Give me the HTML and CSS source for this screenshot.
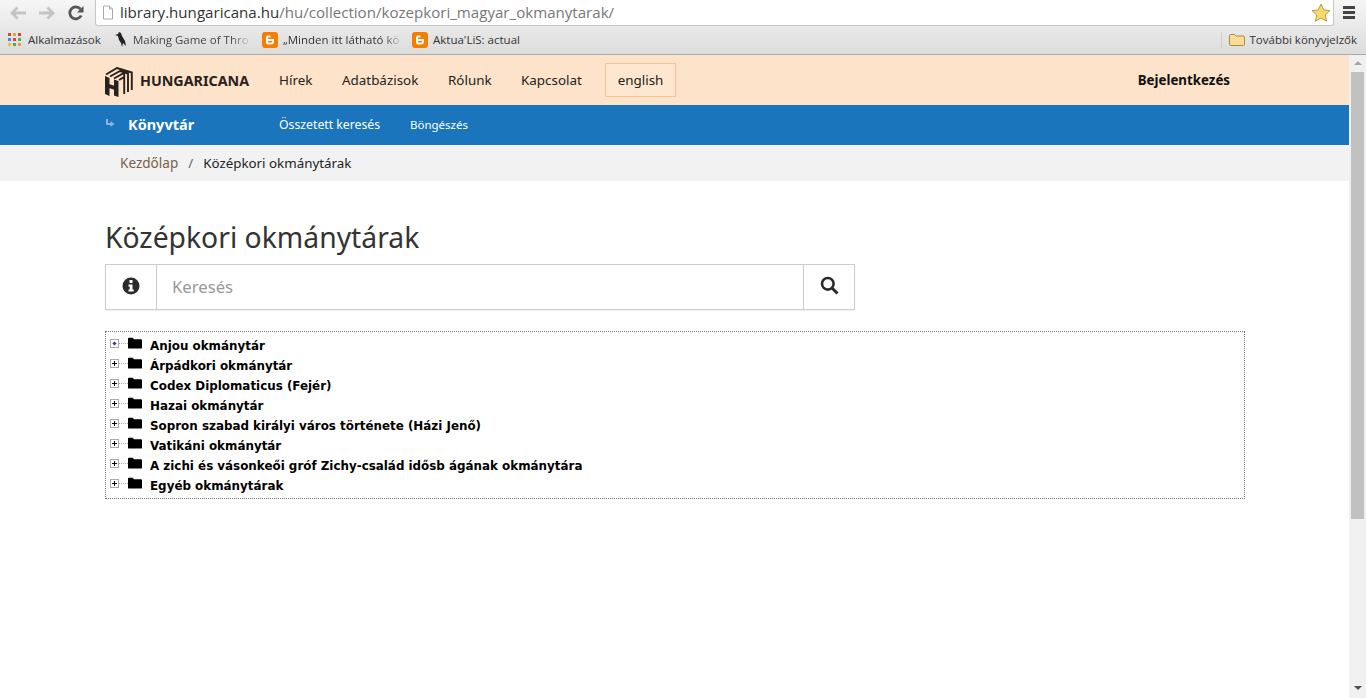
FILE: index.html
```html
<!DOCTYPE html>
<html lang="hu">
<head>
<meta charset="utf-8">
<title>Középkori okmánytárak</title>
<link rel="stylesheet" href="styles.css">
</head>
<body>
<div class="browser">
  <div class="toolbar">
    <svg class="nav-ic" width="16" height="14" viewBox="0 0 16 14"><path d="M7.500 1.500 2 7l5.500 5.500M2 7h14" fill="none" stroke="#c4c4c4" stroke-width="2.800"/></svg>
    <svg class="nav-ic" width="16" height="14" viewBox="0 0 16 14"><path d="M8.500 1.500 14 7l-5.500 5.500M14 7H0" fill="none" stroke="#c4c4c4" stroke-width="2.800"/></svg>
    <svg class="nav-ic" width="16" height="16" viewBox="0 0 16 16"><path d="M13.200 10.500A6 6 0 1 1 12.400 4" fill="none" stroke="#555" stroke-width="2.800"/><path d="M15.500 1v6.500H9z" fill="#555"/></svg>
    <div class="omnibox">
      <svg width="12" height="15" viewBox="0 0 12 15"><path d="M1.500 1h6l3 3v10h-9zM7.500 1v3h3" fill="#fff" stroke="#aaa"/></svg>
      <span class="url"><span class="url-host">library.hungaricana.hu</span>/hu/collection/kozepkori_magyar_okmanytarak/</span>
      <svg class="star" width="20" height="19" viewBox="0 0 20 19"><path d="M10 1l2.700 5.900 6.300.7-4.700 4.300 1.300 6.300L10 15l-5.600 3.200 1.300-6.300L1 7.600l6.300-.7z" fill="#fbd968" stroke="#b59a4a"/></svg>
    </div>
    <div class="menu-ic"><span></span><span></span><span></span></div>
  </div>
  <div class="bookmarks">
    <svg width="13" height="13" viewBox="0 0 13 13" class="apps"><rect x="0" y="0" width="3" height="3" fill="#d9453a"/><rect x="5" y="0" width="3" height="3" fill="#e8a33d"/><rect x="10" y="0" width="3" height="3" fill="#d9453a"/><rect x="0" y="5" width="3" height="3" fill="#4a86e8"/><rect x="5" y="5" width="3" height="3" fill="#d9453a"/><rect x="10" y="5" width="3" height="3" fill="#5aa95a"/><rect x="0" y="10" width="3" height="3" fill="#e8c33d"/><rect x="5" y="10" width="3" height="3" fill="#5aa95a"/><rect x="10" y="10" width="3" height="3" fill="#e8a33d"/></svg>
    <span class="bm bm-apps">Alkalmazások</span>
    <svg class="bird" width="13" height="15" viewBox="0 0 13 15"><path d="M1 3l3-1 1-2 2 1 1 3 3 5 1 5-3-3-1 4-1-4-2-3-1-4z" fill="#222"/></svg>
    <span class="bm bm-game">Making Game of Thro</span>
    <svg class="blog" width="16" height="16" viewBox="0 0 16 16"><rect width="16" height="16" rx="3" fill="#f57d00"/><path d="M5 4.500h3.500M5 8h6v1.500a2 2 0 0 1-2 2H6.500a1.500 1.500 0 0 1-1.500-1.500V4.500" fill="none" stroke="#fff" stroke-width="2"/></svg>
    <span class="bm bm-min">„Minden itt látható kö</span>
    <svg class="blog" width="16" height="16" viewBox="0 0 16 16"><rect width="16" height="16" rx="3" fill="#f57d00"/><path d="M5 4.500h3.500M5 8h6v1.500a2 2 0 0 1-2 2H6.500a1.500 1.500 0 0 1-1.500-1.500V4.500" fill="none" stroke="#fff" stroke-width="2"/></svg>
    <span class="bm">Aktua'LiS: actual</span>
    <span class="bm-spacer"></span>
    <span class="bm-sep"></span>
    <svg class="folder" width="16" height="13" viewBox="0 0 16 13"><path d="M.5 2.500a1 1 0 0 1 1-1h4l1.500 1.500h7.500a1 1 0 0 1 1 1v7.500a1 1 0 0 1-1 1h-13a1 1 0 0 1-1-1z" fill="#fbdc92" stroke="#a98a4b"/></svg>
    <span class="bm">További könyvjelzők</span>
  </div>
</div>
<div class="viewport">
  <div class="page">
    <header class="topnav">
      <a class="logo">
        <svg width="28" height="30" viewBox="0 0 28 30"><path d="M0 9l4.500 2v18L0 27zM9 12.500l4.500 1.500v16L9 28.500zM4 17l6 2v4l-6-2z" fill="#2a211d"/><path d="M1 7.500 12 1l14.800 4.500V23M5 9.500 15 4l8 2.500V25M9 11.500 18 6.500l1.200.4V27M14 13l5-2.800" fill="none" stroke="#2a211d" stroke-width="1.900"/></svg>
        <span class="logo-text">HUNGARICANA</span>
      </a>
      <a class="nav-a nav-hirek">Hírek</a>
      <a class="nav-a nav-adat">Adatbázisok</a>
      <a class="nav-a nav-rol">Rólunk</a>
      <a class="nav-a nav-kap">Kapcsolat</a>
      <a class="nav-a lang">english</a>
      <a class="login">Bejelentkezés</a>
    </header>
    <nav class="subnav">
      <svg class="sub-arrow" width="10" height="10" viewBox="0 0 10 10"><path d="M2 0v5h4" fill="none" stroke="#8db5da" stroke-width="2"/><path d="M5.500 2 9.500 5 5.500 8z" fill="#8db5da"/></svg>
      <span class="sub-title">Könyvtár</span>
      <a class="sub-a sub-first">Összetett keresés</a>
      <a class="sub-a sub-last">Böngészés</a>
    </nav>
    <div class="crumbs">
      <a class="crumb-link">Kezdőlap</a>
      <span class="crumb-sep">/</span>
      <span>Középkori okmánytárak</span>
    </div>
    <main class="content">
      <h1 class="title">Középkori okmánytárak</h1>
      <form class="search">
        <span class="search-cell search-info">
          <svg width="18" height="18" viewBox="0 0 18 18"><circle cx="9" cy="9" r="8.500" fill="#2b2b2b"/><rect x="7.500" y="3" width="3" height="3" fill="#fff"/><path d="M6.500 7.500h4v5h1.200v2H6.500v-2h1.200v-3H6.500z" fill="#fff"/></svg>
        </span>
        <span class="search-input">Keresés</span>
        <span class="search-cell search-btn">
          <svg width="19" height="19" viewBox="0 0 19 19"><circle cx="7.800" cy="7.800" r="5.800" fill="none" stroke="#2b2b2b" stroke-width="2.600"/><path d="M12 12l5.500 5.500" stroke="#2b2b2b" stroke-width="3"/></svg>
        </span>
      </form>
      <ul class="tree">
        <li class="tree-item"><span class="exp exp-active"></span><span class="dots"></span><svg class="fold" width="14" height="12" viewBox="0 0 15 12"><path d="M0 1.500a1 1 0 0 1 1-1h4l1.500 1.500H14a1 1 0 0 1 1 1V11a1 1 0 0 1-1 1H1a1 1 0 0 1-1-1z"/></svg><span class="label">Anjou okmánytár</span></li>
        <li class="tree-item"><span class="exp"></span><span class="dots"></span><svg class="fold" width="14" height="12" viewBox="0 0 15 12"><path d="M0 1.500a1 1 0 0 1 1-1h4l1.500 1.500H14a1 1 0 0 1 1 1V11a1 1 0 0 1-1 1H1a1 1 0 0 1-1-1z"/></svg><span class="label">Árpádkori okmánytár</span></li>
        <li class="tree-item"><span class="exp"></span><span class="dots"></span><svg class="fold" width="14" height="12" viewBox="0 0 15 12"><path d="M0 1.500a1 1 0 0 1 1-1h4l1.500 1.500H14a1 1 0 0 1 1 1V11a1 1 0 0 1-1 1H1a1 1 0 0 1-1-1z"/></svg><span class="label">Codex Diplomaticus (Fejér)</span></li>
        <li class="tree-item"><span class="exp"></span><span class="dots"></span><svg class="fold" width="14" height="12" viewBox="0 0 15 12"><path d="M0 1.500a1 1 0 0 1 1-1h4l1.500 1.500H14a1 1 0 0 1 1 1V11a1 1 0 0 1-1 1H1a1 1 0 0 1-1-1z"/></svg><span class="label">Hazai okmánytár</span></li>
        <li class="tree-item"><span class="exp"></span><span class="dots"></span><svg class="fold" width="14" height="12" viewBox="0 0 15 12"><path d="M0 1.500a1 1 0 0 1 1-1h4l1.500 1.500H14a1 1 0 0 1 1 1V11a1 1 0 0 1-1 1H1a1 1 0 0 1-1-1z"/></svg><span class="label">Sopron szabad királyi város története (Házi Jenő)</span></li>
        <li class="tree-item"><span class="exp"></span><span class="dots"></span><svg class="fold" width="14" height="12" viewBox="0 0 15 12"><path d="M0 1.500a1 1 0 0 1 1-1h4l1.500 1.500H14a1 1 0 0 1 1 1V11a1 1 0 0 1-1 1H1a1 1 0 0 1-1-1z"/></svg><span class="label">Vatikáni okmánytár</span></li>
        <li class="tree-item"><span class="exp"></span><span class="dots"></span><svg class="fold" width="14" height="12" viewBox="0 0 15 12"><path d="M0 1.500a1 1 0 0 1 1-1h4l1.500 1.500H14a1 1 0 0 1 1 1V11a1 1 0 0 1-1 1H1a1 1 0 0 1-1-1z"/></svg><span class="label">A zichi és vásonkeői gróf Zichy-család idősb ágának okmánytára</span></li>
        <li class="tree-item"><span class="exp"></span><span class="dots"></span><svg class="fold" width="14" height="12" viewBox="0 0 15 12"><path d="M0 1.500a1 1 0 0 1 1-1h4l1.500 1.500H14a1 1 0 0 1 1 1V11a1 1 0 0 1-1 1H1a1 1 0 0 1-1-1z"/></svg><span class="label">Egyéb okmánytárak</span></li>
      </ul>
    </main>
  </div>
  <div class="scrollbar">
    <span class="sb-up"></span>
    <span class="sb-thumb"></span>
    <span class="sb-down"></span>
  </div>
</div>
</body>
</html>
```
FILE: styles.css
```css
* { box-sizing: border-box; }
html, body { margin: 0; height: 100%; overflow: hidden; background: #fff; }
body { display: flex; flex-direction: column; font-family: "Noto Sans", sans-serif; color: #222; }
a { color: inherit; text-decoration: none; }

.browser { height: 55px; flex: none; background: linear-gradient(#f6f6f6, #dcdcdc); border-bottom: 1px solid #a9a9a9; }
.toolbar { height: 27px; display: flex; align-items: center; padding-left: 10px; }
.nav-ic { margin-right: 13px; margin-top: -2px; }
.nav-ic + .nav-ic + .nav-ic { margin-right: 11px; }
.omnibox { width: 1239px; height: 26px; margin-top: -2px; background: #fff; border: 1px solid #c6c6c6; border-top: 0; border-radius: 0 0 3px 3px; display: flex; align-items: center; padding-left: 6px; }
.url { font-family: "Open Sans", sans-serif; font-size: 15.100px; color: #777; margin-left: 6px; white-space: nowrap; flex: 1; }
.url-host { color: #333; }
.star { margin-right: 2px; }
.menu-ic { margin-left: 9px; display: flex; flex-direction: column; gap: 2px; margin-top: -2px; }
.menu-ic span { display: block; width: 12px; height: 3px; background: #444; }

.bookmarks { height: 27px; display: flex; align-items: center; padding: 0 9px 2px 8px; font-family: "Open Sans", sans-serif; font-size: 11.500px; color: #333; white-space: nowrap; }
.bm { display: block; }
.apps { margin-right: 7px; }
.bm-apps { width: 86px; }
.bird { margin-right: 6px; }
.bm-game { width: 115px; margin-right: 14px; overflow: hidden; color: #444; -webkit-mask-image: linear-gradient(90deg, #000 85%, transparent 103%); mask-image: linear-gradient(90deg, #000 85%, transparent 103%); }
.blog { margin-right: 5px; }
.bm-min { width: 117px; margin-right: 12px; overflow: hidden; -webkit-mask-image: linear-gradient(90deg, #000 85%, transparent 103%); mask-image: linear-gradient(90deg, #000 85%, transparent 103%); }
.bm-spacer { flex: 1; }
.bm-sep { width: 1px; height: 16px; background: #ccc; margin-right: 7px; }
.folder { margin-right: 5px; }

.viewport { flex: 1; display: flex; min-height: 0; }
.page { flex: 1; min-width: 0; }

.topnav { height: 50px; background: #fde3ca; display: flex; align-items: center; padding-left: 105px; font-size: 13.400px; color: #222; }
.logo { display: flex; align-items: center; gap: 7px; width: 174px; padding-top: 3px; }
.logo-text { font-family: "Noto Sans", sans-serif; font-weight: 700; font-size: 14.300px; color: #2a211d; margin-top: -2px; }
.nav-a { display: block; }
.nav-hirek { width: 63px; }
.nav-adat { width: 106px; }
.nav-rol { width: 73px; }
.nav-kap { width: 84px; }
.lang { width: 71px; height: 34px; line-height: 32px; text-align: center; background: #fee7d1; border: 1px solid #f8c38f; }
.login { margin-left: auto; margin-right: 119px; font-weight: 700; font-size: 13.300px; color: #111; }

.subnav { height: 40px; background: #1a75bc; display: flex; align-items: center; padding-left: 105px; color: #fff; font-size: 12.250px; padding-bottom: 2px; }
.sub-arrow { margin-right: 13px; }
.sub-title { font-weight: 700; font-size: 14.500px; width: 151px; }
.sub-a { display: block; }
.sub-first { width: 131px; }
.sub-last { font-size: 11.500px; }

.crumbs { height: 36px; background: #f2f2f2; display: flex; align-items: center; padding-left: 120px; font-size: 13.350px; color: #222; }
.crumb-link { color: #7a5f47; font-size: 13.550px; }
.crumb-sep { margin: 0 10px; color: #666; }

.content { padding: 0 105px; }
.title { margin: 36px 0 0; font-size: 28.300px; font-weight: 400; line-height: 40px; color: #333; height: 47px; }
.search { width: 750px; height: 46px; display: flex; border: 1px solid #ccc; box-shadow: 0 1px 1px rgba(0,0,0,.05); }
.search-cell { width: 51px; flex: none; display: flex; align-items: center; justify-content: center; padding-bottom: 3px; }
.search-info { width: 50px; }
.search-input { flex: 1; border-left: 1px solid #ccc; padding-left: 15px; font-size: 16.700px; line-height: 43px; color: #999; }
.search-btn { border-left: 1px solid #ccc; }

.tree { list-style: none; margin: 21px 0 0; padding: 3px 0 3px 4px; width: 1140px; height: 168px; border: 1px dotted #777; }
.tree-item { height: 20px; display: flex; align-items: center; font-family: "DejaVu Sans", sans-serif; font-size: 11.900px; font-weight: 700; color: #000; }
.exp { position: relative; width: 9px; height: 9px; border: 1px solid #aaa; background: #fff; flex: none; margin-top: -4px; }
.exp::before { content: ""; position: absolute; left: 1px; top: 3px; width: 5px; height: 1px; background: #000; }
.exp::after { content: ""; position: absolute; left: 3px; top: 1px; width: 1px; height: 5px; background: #000; }
.exp-active::before { left: 2px; top: 2px; width: 3px; height: 3px; background: #33c; transform: rotate(45deg); }
.exp-active::after { display: none; }
.dots { width: 9px; border-top: 1px dotted #aaa; margin-top: -4px; flex: none; }
.fold { margin-top: -4px; margin-right: 8px; flex: none; }
.label { white-space: nowrap; padding-top: 2px; }

.scrollbar { width: 17px; flex: none; background: #f0f0f0; display: flex; flex-direction: column; align-items: center; }
.sb-up { width: 0; height: 0; border: 4px solid transparent; border-top: 0; border-bottom: 4px solid #a6a6a6; margin: 6px 0 7px; }
.sb-thumb { width: 13px; height: 447px; background: #c1c1c1; }
.sb-down { width: 0; height: 0; border: 4px solid transparent; border-bottom: 0; border-top: 4px solid #505050; margin-top: auto; margin-bottom: 8px; }
```
